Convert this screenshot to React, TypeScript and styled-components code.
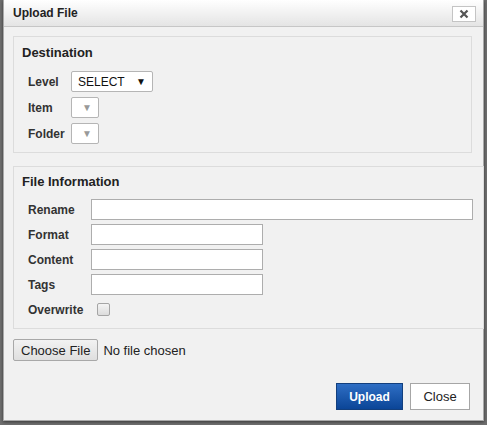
import React from "react";
import styled, { createGlobalStyle } from "styled-components";

const Global = createGlobalStyle`
  html, body { margin: 0; padding: 0; }
  body {
    background: #6f6f6f;
    font-family: "Liberation Sans", Arial, sans-serif;
    width: 487px;
    height: 425px;
    overflow: hidden;
  }
`;

const Page = styled.div`
  padding: 0 3px 0 3px;
  height: 425px;
  box-sizing: border-box;
`;

const Dialog = styled.div`
  width: 481px;
  height: 421px;
  box-sizing: border-box;
  background: #f1f1f1;
  border: 1px solid #a9a9a9;
  border-top: none;
  display: flex;
  flex-direction: column;
  box-shadow: 0 1px 3px rgba(0, 0, 0, 0.5);
`;

const TitleBar = styled.div`
  height: 27px;
  box-sizing: border-box;
  background: linear-gradient(#ffffff, #e4e4e4);
  border-bottom: 1px solid #c6c6c6;
  display: flex;
  align-items: center;
  justify-content: space-between;
  padding: 0 7px 0 9px;
`;

const Title = styled.span`
  font-size: 12px;
  font-weight: bold;
  color: #222;
`;

const XButton = styled.button`
  width: 24px;
  height: 16px;
  margin-top: 1px;
  padding: 0;
  background: #ffffff;
  border: 1px solid #c4c4c4;
  display: flex;
  align-items: center;
  justify-content: center;
`;

const Body = styled.div`
  flex: 1;
  display: flex;
  flex-direction: column;
  padding: 9px 0 0 9px;
`;

const Box = styled.div<{ $w: number; $h: number; $top?: number; $pad: number }>`
  width: ${(p) => p.$w}px;
  height: ${(p) => p.$h}px;
  margin-top: ${(p) => p.$top ?? 0}px;
  box-sizing: border-box;
  border: 1px solid #dcdcdc;
  padding: ${(p) => p.$pad}px 0 0 14px;
  display: flex;
  flex-direction: column;
`;

const BoxTitle = styled.div`
  font-size: 13px;
  font-weight: bold;
  color: #222;
  margin-left: -6px;
  height: 17px;
  line-height: 17px;
`;

const Rows = styled.div<{ $gap: number; $top: number }>`
  display: flex;
  flex-direction: column;
  gap: ${(p) => p.$gap}px;
  margin-top: ${(p) => p.$top}px;
`;

const Row = styled.div`
  display: flex;
  align-items: center;
  height: 21px;
`;

const Label = styled.label<{ $w: number }>`
  width: ${(p) => p.$w}px;
  font-size: 12px;
  font-weight: bold;
  color: #333;
`;

const SelectBox = styled.div<{ $w: number }>`
  width: ${(p) => p.$w}px;
  height: 21px;
  box-sizing: border-box;
  background: #fff;
  border: 1px solid #b5b5b5;
  border-radius: 2px;
  display: flex;
  align-items: center;
  justify-content: space-between;
  padding: 0 6px 0 6px;
  font-size: 12px;
  color: #111;
`;

const Arrow = styled.span<{ $muted?: boolean }>`
  font-size: 10px;
  color: ${(p) => (p.$muted ? "#999" : "#111")};
  margin-left: auto;
`;

const TextInput = styled.input<{ $w: number }>`
  width: ${(p) => p.$w}px;
  height: 21px;
  box-sizing: border-box;
  border: 1px solid #adadad;
  background: #fff;
  margin: 0;
  padding: 0 3px;
`;

const Check = styled.span`
  width: 11px;
  height: 11px;
  border: 1px solid #a5a5a5;
  border-radius: 2px;
  background: linear-gradient(#f4f4f4, #dcdcdc);
  margin-left: 1px;
`;

const FileRow = styled.div`
  display: flex;
  align-items: center;
  gap: 5px;
  margin-top: 10px;
`;

const FileButton = styled.button`
  height: 22px;
  padding: 0 7px;
  box-sizing: border-box;
  font-family: "Liberation Sans", Arial, sans-serif;
  font-size: 13px;
  color: #222;
  background: linear-gradient(#f2f2f2, #dfdfdf);
  border: 1px solid #a8a8a8;
  border-radius: 2px;
`;

const FileText = styled.span`
  font-size: 13px;
  color: #222;
`;

const Footer = styled.div`
  display: flex;
  justify-content: flex-end;
  gap: 7px;
  margin-top: 22px;
  padding-right: 13px;
`;

const Btn = styled.button<{ $primary?: boolean }>`
  height: 27px;
  box-sizing: border-box;
  font-family: "Liberation Sans", Arial, sans-serif;
  font-size: ${(p) => (p.$primary ? 12 : 13)}px;
  font-weight: ${(p) => (p.$primary ? "bold" : "normal")};
  color: ${(p) => (p.$primary ? "#fff" : "#222")};
  background: ${(p) =>
    p.$primary ? "linear-gradient(#2e6ec4, #0b4597)" : "#fff"};
  border: 1px solid ${(p) => (p.$primary ? "#123f7e" : "#a6a6a6")};
  width: ${(p) => (p.$primary ? 67 : 60)}px;
  padding: 0;
`;

export default function App() {
  return (
    <Page>
      <Global />
      <Dialog>
        <TitleBar>
          <Title>Upload File</Title>
          <XButton aria-label="close">
            <svg width="10" height="10" viewBox="0 0 10 10">
              <path d="M1.5 1.5 L8.5 8.5 M8.5 1.5 L1.5 8.5" stroke="#555" strokeWidth="2.2" />
            </svg>
          </XButton>
        </TitleBar>
        <Body>
          <Box $w={459} $h={117} $pad={7}>
            <BoxTitle>Destination</BoxTitle>
            <Rows $gap={5} $top={10}>
              <Row>
                <Label $w={43}>Level</Label>
                <SelectBox $w={82}>
                  SELECT<Arrow>▼</Arrow>
                </SelectBox>
              </Row>
              <Row>
                <Label $w={43}>Item</Label>
                <SelectBox $w={28}>
                  <Arrow $muted>▼</Arrow>
                </SelectBox>
              </Row>
              <Row>
                <Label $w={43}>Folder</Label>
                <SelectBox $w={28}>
                  <Arrow $muted>▼</Arrow>
                </SelectBox>
              </Row>
            </Rows>
          </Box>
          <Box $w={471} $h={163} $top={13} $pad={6}>
            <BoxTitle>File Information</BoxTitle>
            <Rows $gap={4} $top={9}>
              <Row>
                <Label $w={63}>Rename</Label>
                <TextInput $w={382} />
              </Row>
              <Row>
                <Label $w={63}>Format</Label>
                <TextInput $w={172} />
              </Row>
              <Row>
                <Label $w={63}>Content</Label>
                <TextInput $w={172} />
              </Row>
              <Row>
                <Label $w={63}>Tags</Label>
                <TextInput $w={172} />
              </Row>
              <Row>
                <Label $w={68}>Overwrite</Label>
                <Check />
              </Row>
            </Rows>
          </Box>
          <FileRow>
            <FileButton>Choose File</FileButton>
            <FileText>No file chosen</FileText>
          </FileRow>
          <Footer>
            <Btn $primary>Upload</Btn>
            <Btn>Close</Btn>
          </Footer>
        </Body>
      </Dialog>
    </Page>
  );
}
